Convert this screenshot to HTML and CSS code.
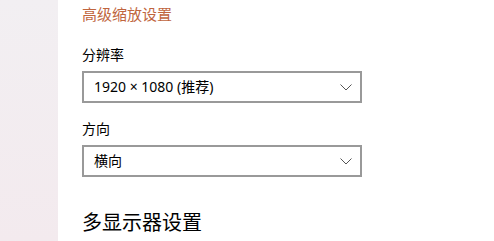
FILE: index.html
```html
<!DOCTYPE html>
<html lang="zh-CN">
<head>
<meta charset="utf-8">
<link rel="stylesheet" href="styles.css">
</head>
<body>
<div class="page">
  <aside class="sidebar"></aside>
  <main class="main">
    <a class="link">高级缩放设置</a>
    <div class="label">分辨率</div>
    <div class="select">
      <span class="value">1920 × 1080 (推荐)</span>
      <svg class="chev" width="12" height="7" viewBox="0 0 12 7"><path d="M0.5 0.5 L6 6 L11.5 0.5" fill="none" stroke="#555" stroke-width="1"/></svg>
    </div>
    <div class="label label2">方向</div>
    <div class="select">
      <span class="value">横向</span>
      <svg class="chev" width="12" height="7" viewBox="0 0 12 7"><path d="M0.5 0.5 L6 6 L11.5 0.5" fill="none" stroke="#555" stroke-width="1"/></svg>
    </div>
    <h2 class="section">多显示器设置</h2>
  </main>
</div>
</body>
</html>
```
FILE: styles.css
```css
html, body {
  margin: 0;
  padding: 0;
  background: #ffffff;
}
body {
  font-family: "Noto Sans", "Noto Sans CJK SC", sans-serif;
  color: #000;
  width: 494px;
  height: 241px;
  overflow: hidden;
}
.page {
  display: flex;
  height: 241px;
}
.sidebar {
  width: 58px;
  flex: none;
  background: linear-gradient(#f2eff2, #f3eaee);
}
.main {
  flex: 1;
  padding-left: 24px;
  display: flex;
  flex-direction: column;
  align-items: flex-start;
}
.link {
  color: #c0653e;
  font-size: 15px;
  line-height: 20px;
  margin-top: 4px;
}
.label {
  font-size: 14px;
  line-height: 20px;
  margin-top: 21px;
}
.label2 {
  margin-top: 16px;
}
.select {
  box-sizing: border-box;
  width: 280px;
  height: 32px;
  border: 2px solid #999999;
  margin-top: 6px;
  display: flex;
  align-items: center;
  justify-content: space-between;
  padding: 0 8px 0 10px;
}
.value {
  font-size: 14px;
  line-height: 20px;
}
.chev {
  display: block;
}
.section {
  font-size: 20px;
  font-weight: normal;
  line-height: 28px;
  margin: 32px 0 0 0;
}
```
